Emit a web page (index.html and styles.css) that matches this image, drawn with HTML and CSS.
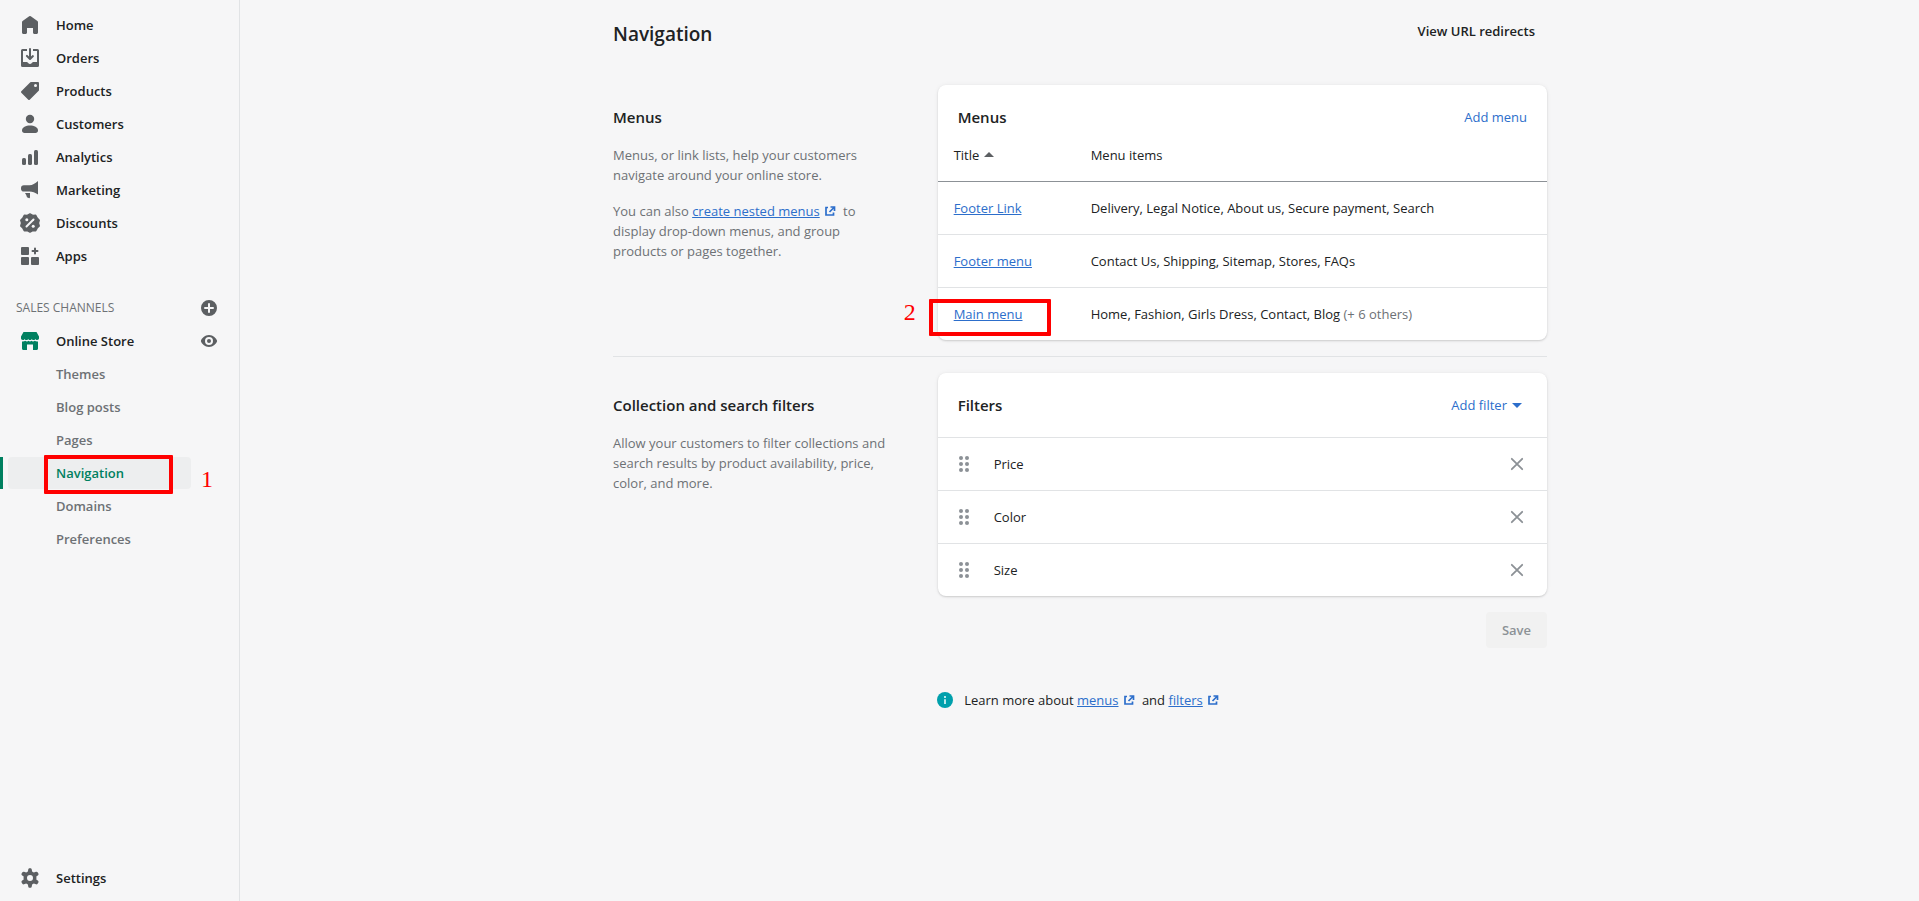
FILE: index.html
```html
<!DOCTYPE html>
<html lang="en">
<head>
<meta charset="utf-8">
<meta name="viewport" content="width=device-width, initial-scale=1">
<title>Navigation</title>
<link rel="stylesheet" href="styles.css">
</head>
<body>
<svg class="sprite" aria-hidden="true">
  <symbol id="external" viewBox="0 0 20 20"><path d="M8 6.500H6V14h7.500v-2.500M10.500 6h4v4M14 6.500l-4.500 4.500" fill="none" stroke="currentColor" stroke-width="1.700"/></symbol>
  <symbol id="drag" viewBox="0 0 20 20"><circle cx="7" cy="4" r="2"/><circle cx="13" cy="4" r="2"/><circle cx="7" cy="10" r="2"/><circle cx="13" cy="10" r="2"/><circle cx="7" cy="16" r="2"/><circle cx="13" cy="16" r="2"/></symbol>
  <symbol id="close" viewBox="0 0 20 20"><path d="M4.800 4.800l10.400 10.400M15.200 4.800l-10.400 10.400" fill="none" stroke="currentColor" stroke-width="1.800" stroke-linecap="round"/></symbol>
</svg>
<div class="app">
  <nav class="sidebar" aria-label="Main">
    <ul class="nav-list">
      <li><a class="nav-item" href="#"><svg class="icon" viewBox="0 0 20 20"><path d="M18 7.300V17.500c0 .8-.7 1.500-1.500 1.500h-2c-.8 0-1.500-.7-1.500-1.500V13H7v4.500C7 18.300 6.300 19 5.500 19h-2C2.700 19 2 18.300 2 17.500V7.300a1.500 1.500 0 0 1 .6-1.200l6.600-4.900a1.500 1.500 0 0 1 1.600 0l6.600 4.900a1.500 1.500 0 0 1 .6 1.200z"/></svg>Home</a></li>
      <li><a class="nav-item" href="#"><svg class="icon" viewBox="0 0 20 20"><path d="M11 1a1 1 0 1 0-2 0v7.600L7.700 7.300a1 1 0 1 0-1.400 1.400l3 3a1 1 0 0 0 1.400 0l3-3a1 1 0 0 0-1.400-1.400L11 8.600V1z"/><path d="M3 14V3h4V1H2.500A1.500 1.500 0 0 0 1 2.500v15A1.500 1.500 0 0 0 2.500 19h15a1.500 1.500 0 0 0 1.500-1.500v-15A1.500 1.500 0 0 0 17.500 1H13v2h4v11h-3.500c-.8 0-1.400.7-1.900 1.200A2 2 0 0 1 10 16a2 2 0 0 1-1.600-.8C7.900 14.700 7.300 14 6.500 14H3z"/></svg>Orders</a></li>
      <li><a class="nav-item" href="#"><svg class="icon" viewBox="0 0 20 20"><path fill-rule="evenodd" d="M10.300 1.300A1 1 0 0 1 11 1h7a1 1 0 0 1 1 1v7a1 1 0 0 1-.3.700l-9 9a1 1 0 0 1-1.400 0l-7-7a1 1 0 0 1 0-1.400l9-9zM15.500 6a1.500 1.500 0 1 0 0-3 1.500 1.500 0 0 0 0 3z"/></svg>Products</a></li>
      <li><a class="nav-item" href="#"><svg class="icon" viewBox="0 0 20 20"><circle cx="10" cy="5" r="4.200"/><path d="M2 16.500C2 13 6 11.500 10 11.500s8 1.500 8 5c0 1.500-1 2.500-2.500 2.500h-11C3 19 2 18 2 16.500z"/></svg>Customers</a></li>
      <li><a class="nav-item" href="#"><svg class="icon" viewBox="0 0 20 20"><rect x="2" y="11" width="4" height="7" rx="1.500"/><rect x="8" y="7" width="4" height="11" rx="1.500"/><rect x="14" y="3" width="4" height="15" rx="1.500"/></svg>Analytics</a></li>
      <li><a class="nav-item" href="#"><svg class="icon" viewBox="0 0 20 20"><path d="M18 1v13.600c-3-2-5.500-3.100-8.500-3.100H4A3 3 0 0 1 1 8.400 3 3 0 0 1 4 5.300h5.500C12.500 5.300 15 3.500 18 1zM5 13h5v4.200A1 1 0 0 1 8.600 18L7 17.200 6.200 15z"/></svg>Marketing</a></li>
      <li><a class="nav-item" href="#"><svg class="icon" viewBox="0 0 20 20"><path d="M10 .9l2.700 1.500 3-.1 1.400 2.700 2.100 2.200-.8 2.800.8 2.900-2.100 2.200-1.400 2.600-3-.1L10 19.100l-2.700-1.500-3 .1-1.400-2.600L.8 12.900l.8-2.900-.8-2.800 2.100-2.200 1.400-2.700 3 .1z" stroke="currentColor" stroke-width="1.500" stroke-linejoin="round"/><path d="M6.500 13.500l7-7" stroke="#f6f6f7" stroke-width="2" stroke-linecap="round"/><circle cx="6.800" cy="6.800" r="1.500" fill="#f6f6f7"/><circle cx="13.200" cy="13.200" r="1.500" fill="#f6f6f7"/></svg>Discounts</a></li>
      <li><a class="nav-item" href="#"><svg class="icon" viewBox="0 0 20 20"><rect x="1" y="1" width="8" height="8" rx="1"/><rect x="1" y="11" width="8" height="8" rx="1"/><rect x="11" y="11" width="8" height="8" rx="1"/><path d="M15 2.500v5M12.500 5h5" stroke="currentColor" stroke-width="2" stroke-linecap="round"/></svg>Apps</a></li>
    </ul>
    <div class="section-head">
      <h2 class="section-title">SALES CHANNELS</h2>
      <button class="icon-button" type="button" aria-label="Add sales channel"><svg class="icon" viewBox="0 0 20 20"><path fill-rule="evenodd" d="M10 2a8 8 0 1 0 0 16 8 8 0 0 0 0-16zM9 6a1 1 0 0 1 2 0v3h3a1 1 0 0 1 0 2h-3v3a1 1 0 0 1-2 0v-3H6a1 1 0 0 1 0-2h3z"/></svg></button>
    </div>
    <ul class="nav-list">
      <li class="store-row">
        <a class="nav-item" href="#"><svg class="icon icon-green" viewBox="0 0 20 20"><path d="M3.500 1h13L19 5.500v1.800c0 1-.8 1.700-1.800 1.700-1.200 0-1.800-.8-1.800-1.300 0 .8-.8 1.300-1.800 1.300s-1.800-.6-1.800-1.300C11.800 8.400 11 9 10 9s-1.800-.6-1.800-1.300C8.200 8.400 7.400 9 6.400 9s-1.800-.6-1.800-1.300C4.600 8.400 4 9 2.800 9 1.800 9 1 8.300 1 7.300V5.500z"/><path d="M2 10.400c1.500.3 2.600-.2 3.200-.7 1 .9 2.600.9 3.400 0 .8.900 2 .9 2.800 0 .8.900 2.400.9 3.400 0 .6.500 1.700 1 3.200.7v7.100c0 .9-.6 1.500-1.500 1.500H13v-5.500H7V19H3.500c-.9 0-1.500-.6-1.500-1.500z"/></svg>Online Store</a>
        <button class="icon-button" type="button" aria-label="View your online store"><svg class="icon" viewBox="0 0 20 20"><path fill-rule="evenodd" d="M18 9.500C17.400 7.500 14.200 4 10 4S2.600 7.500 2 9.500a1.600 1.600 0 0 0 0 1C2.600 12.500 5.800 16 10 16s7.400-3.500 8-5.500a1.600 1.600 0 0 0 0-1zM10 14a4 4 0 1 1 0-8 4 4 0 0 1 0 8z"/><circle cx="10" cy="10" r="2"/></svg></button>
      </li>
      <li><a class="nav-item sub" href="#">Themes</a></li>
      <li><a class="nav-item sub" href="#">Blog posts</a></li>
      <li><a class="nav-item sub" href="#">Pages</a></li>
      <li class="current"><a class="nav-item sub active" href="#" aria-current="page">Navigation</a><span class="step-box step-box-one"></span><span class="step-number step-number-one">1</span></li>
      <li><a class="nav-item sub" href="#">Domains</a></li>
      <li><a class="nav-item sub" href="#">Preferences</a></li>
    </ul>
    <a class="nav-item settings" href="#"><svg class="icon" viewBox="0 0 20 20"><path fill-rule="evenodd" d="M8.300 1.300C8.400.6 9 .2 9.600.2h.8c.6 0 1.200.4 1.300 1.100l.4 2.200 1.700 1 2.200-.8c.6-.2 1.300 0 1.600.6l.8 1.300c.3.600.2 1.200-.3 1.600L16.300 8.600a6 6 0 0 1 0 2.800l1.800 1.400c.5.400.6 1 .3 1.600l-.8 1.300c-.3.600-1 .8-1.600.6l-2.200-.8-1.700 1-.4 2.200c-.1.700-.7 1.100-1.300 1.100h-.8c-.6 0-1.200-.4-1.300-1.100l-.4-2.200-1.700-1-2.200.8c-.6.200-1.300 0-1.600-.6l-.8-1.300c-.3-.6-.2-1.200.3-1.600L3.700 11.400a6 6 0 0 1 0-2.800L1.900 7.200c-.5-.4-.6-1-.3-1.600l.8-1.300c.3-.6 1-.8 1.600-.6l2.200.8 1.700-1zM10 13a3 3 0 1 0 0-6 3 3 0 0 0 0 6z"/></svg>Settings</a>
  </nav>

  <main class="page">
    <header class="page-header">
      <h1 class="page-title">Navigation</h1>
      <a class="header-action" href="#">View URL redirects</a>
    </header>

    <section class="block">
      <div class="about">
        <h2 class="heading">Menus</h2>
        <p>Menus, or link lists, help your customers navigate around your online store.</p>
        <p>You can also <a class="link" href="#">create nested menus</a><svg class="external"><use href="#external"/></svg> to display drop-down menus, and group products or pages together.</p>
      </div>
      <div class="card">
        <div class="card-header">
          <h2 class="heading">Menus</h2>
          <button class="plain-button" type="button">Add menu</button>
        </div>
        <table class="menus">
          <thead>
            <tr><th class="col-title" scope="col"><button class="sort" type="button">Title<svg class="icon" viewBox="0 0 20 20"><path d="M5 12l5-5 5 5z"/></svg></button></th><th scope="col">Menu items</th></tr>
          </thead>
          <tbody>
            <tr><td><a class="link" href="#">Footer Link</a></td><td>Delivery, Legal Notice, About us, Secure payment, Search</td></tr>
            <tr><td><a class="link" href="#">Footer menu</a></td><td>Contact Us, Shipping, Sitemap, Stores, FAQs</td></tr>
            <tr><td class="marked"><a class="link" href="#">Main menu</a><span class="step-box step-box-two"></span><span class="step-number step-number-two">2</span></td><td>Home, Fashion, Girls Dress, Contact, Blog <span class="subdued">(+ 6 others)</span></td></tr>
          </tbody>
        </table>
      </div>
    </section>

    <section class="block divided">
      <div class="about">
        <h2 class="heading">Collection and search filters</h2>
        <p>Allow your customers to filter collections and search results by product availability, price, color, and more.</p>
      </div>
      <div class="card">
        <div class="card-header">
          <h2 class="heading">Filters</h2>
          <button class="plain-button" type="button">Add filter<svg class="icon icon-link" viewBox="0 0 20 20"><path d="M5 8l5 5 5-5z"/></svg></button>
        </div>
        <ul class="filters">
          <li class="filter"><svg class="icon icon-soft"><use href="#drag"/></svg><span class="filter-name">Price</span><button class="icon-button" type="button" aria-label="Remove Price"><svg class="icon icon-soft"><use href="#close"/></svg></button></li>
          <li class="filter"><svg class="icon icon-soft"><use href="#drag"/></svg><span class="filter-name">Color</span><button class="icon-button" type="button" aria-label="Remove Color"><svg class="icon icon-soft"><use href="#close"/></svg></button></li>
          <li class="filter"><svg class="icon icon-soft"><use href="#drag"/></svg><span class="filter-name">Size</span><button class="icon-button" type="button" aria-label="Remove Size"><svg class="icon icon-soft"><use href="#close"/></svg></button></li>
        </ul>
      </div>
    </section>

    <div class="actions"><button class="save" type="button" disabled>Save</button></div>

    <footer class="help">
      <svg class="icon icon-info" viewBox="0 0 20 20"><circle cx="10" cy="10" r="10"/><path d="M10 9v6M10 5v2.500" stroke="#e8fbfc" stroke-width="2"/></svg>
      <p>Learn more about <a class="link" href="#">menus</a><svg class="external"><use href="#external"/></svg> and <a class="link" href="#">filters</a><svg class="external"><use href="#external"/></svg></p>
    </footer>
  </main>
</div>
</body>
</html>
```

FILE: styles.css
```css
* { box-sizing: border-box; }

body {
  margin: 0;
  background: #f6f6f7;
  color: #202223;
  font: 13px/20px "Segoe UI", "Open Sans", "Noto Sans", sans-serif;
}

h1, h2, p, ul { margin: 0; padding: 0; }
ul { list-style: none; }
a { color: inherit; text-decoration: none; }
button { margin: 0; padding: 0; border: 0; background: none; color: inherit; font: inherit; cursor: pointer; }

.sprite { position: absolute; width: 0; height: 0; }
.app { display: flex; min-height: 100vh; }

.icon { flex: none; display: block; width: 20px; height: 20px; fill: currentColor; color: #5c5f62; }
.icon-green { color: #008060; }
.icon-soft { color: #8c9196; }
.icon-link { color: #2c6ecb; }
.icon-info { width: 16px; height: 16px; color: #00a0ac; }
.icon-button { display: block; border-radius: 4px; }

.sidebar {
  flex: none;
  display: flex;
  flex-direction: column;
  width: 240px;
  padding: 9px 0 7px;
  border-right: 1px solid #e1e3e5;
}
.nav-list { display: grid; gap: 1px; }
.nav-item {
  display: flex;
  align-items: center;
  gap: 16px;
  height: 32px;
  margin: 0 48px 0 8px;
  padding-left: 12px;
  border-radius: 4px;
  font-weight: 600;
}
.sub { padding-left: 48px; color: #6d7175; }
.active { background: #edeeef; color: #008060; }
.current { position: relative; border-left: 3px solid #008060; }
.current .nav-item { margin-left: 5px; }
.section-head {
  display: flex;
  align-items: center;
  justify-content: space-between;
  height: 32px;
  margin: 20px 0 1px;
  padding: 0 20px 0 16px;
}
.section-title { color: #6d7175; font-size: 12px; font-weight: 400; }
.store-row { display: flex; align-items: center; justify-content: space-between; padding-right: 20px; }
.store-row .nav-item { margin-right: 0; }
.settings { margin-top: auto; }

.page { flex: 1; max-width: 997px; margin: 0 auto; padding: 13px 31px 13px 32px; }
.page-header { display: flex; justify-content: space-between; align-items: flex-start; margin-bottom: 36px; }
.page-title { padding-top: 7px; font-size: 19px; line-height: 28px; font-weight: 600; }
.header-action { padding: 8px 12px; font-weight: 600; }

.block { display: grid; grid-template-columns: 1fr 2fr; gap: 20px; }
.divided { margin-top: 16px; padding-top: 16px; border-top: 1px solid #e1e3e5; }
.heading { font-size: 15px; line-height: 24px; font-weight: 600; }
.about { display: flex; flex-direction: column; gap: 16px; padding: 20px 28px 0 0; color: #6d7175; }
.about .heading { color: #202223; }
.link { color: #2c6ecb; text-decoration: underline; }
.external { display: inline-block; width: 20px; height: 20px; vertical-align: top; color: #2c6ecb; }

.card { border-radius: 8px; background: #fff; box-shadow: 0 0 5px rgba(23, 24, 24, 0.05), 0 1px 2px rgba(0, 0, 0, 0.15); }
.card-header { display: flex; align-items: center; justify-content: space-between; padding: 20px 20px 0; }
.plain-button { display: flex; align-items: center; color: #2c6ecb; }

.menus { width: 100%; border-spacing: 0; }
.menus th, .menus td { height: 53px; padding: 16px; border-bottom: 1px solid #e1e3e5; text-align: left; font-weight: 400; }
.menus th { border-color: #8c9196; }
.menus tbody tr:last-child td { height: 52px; border-bottom: 0; }
.menus .col-title { width: 137px; }
.sort { display: flex; align-items: center; }
.subdued { color: #6d7175; }
.marked { position: relative; }

.filters { margin-top: 20px; }
.filter { display: flex; align-items: center; gap: 20px; padding: 16px 20px 16px 16px; border-top: 1px solid #e1e3e5; }
.filter-name { flex: 1; }

.actions { display: flex; justify-content: flex-end; margin-top: 16px; }
.save { padding: 8px 16px; border-radius: 4px; background: #f1f1f1; color: #8c9196; font-weight: 600; }

.help { display: flex; align-items: center; justify-content: center; gap: 11px; margin-top: 42px; }

/* Walkthrough markers laid over the page */
.step-box { position: absolute; border: 4px solid #f00; border-radius: 1px; pointer-events: none; }
.step-box-one { top: -2px; left: 41px; width: 129px; height: 39px; }
.step-box-two { top: 11px; left: -9px; width: 122px; height: 37px; }
.step-number { position: absolute; color: #f00; font: 24px/24px "Liberation Serif", serif; }
.step-number-one { top: 10px; left: 198px; }
.step-number-two { top: 12px; left: -34px; }
```
